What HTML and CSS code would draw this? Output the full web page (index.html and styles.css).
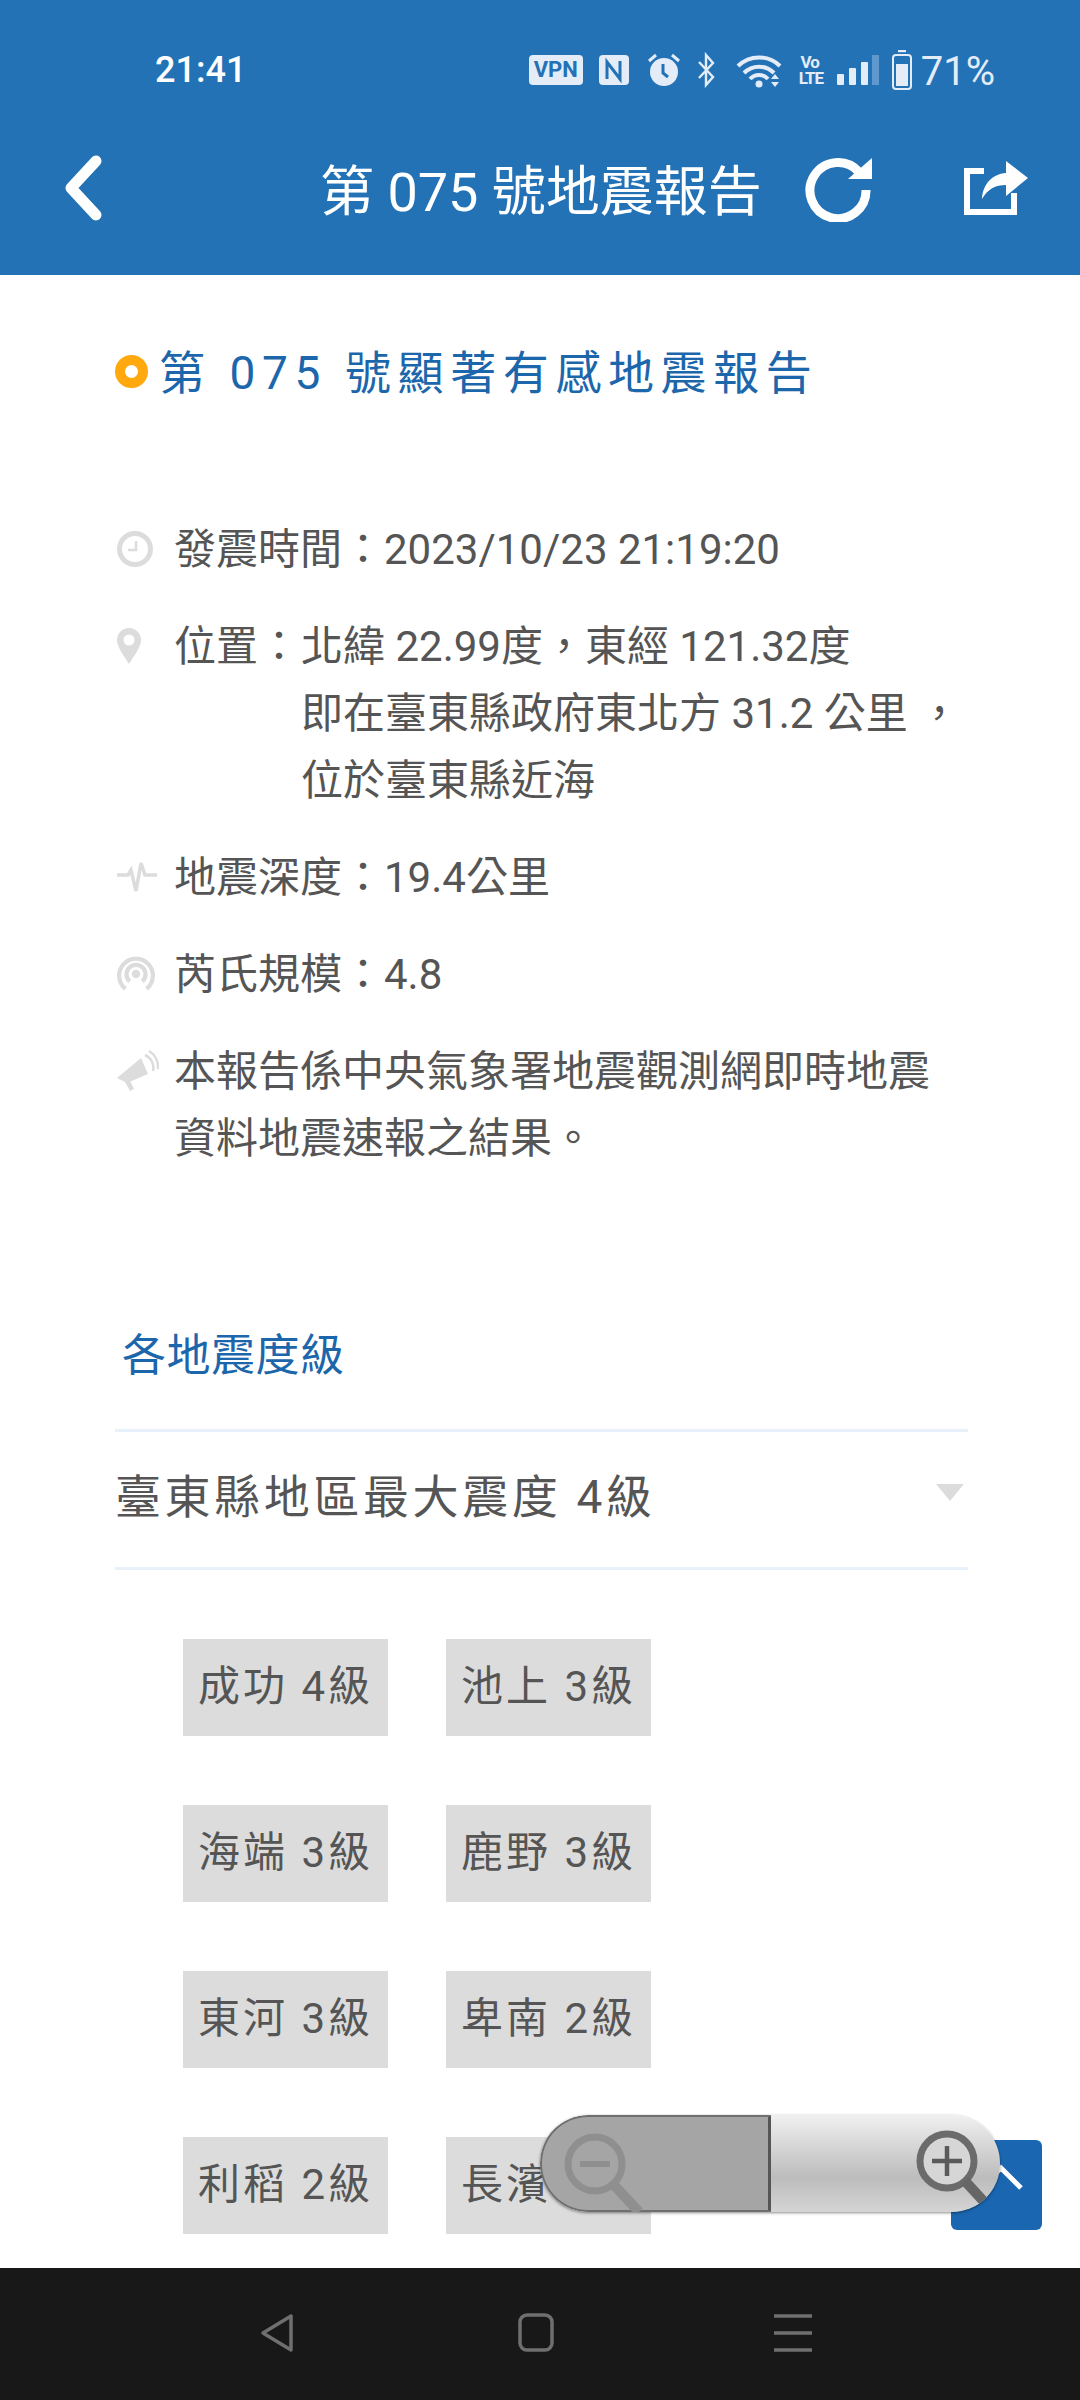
FILE: index.html
```html
<!DOCTYPE html>
<html lang="zh-Hant">
<head>
    <meta charset="UTF-8">
    <meta name="viewport" content="width=device-width, initial-scale=1.0">
    <title>第 075 號地震報告</title>
    <link rel="stylesheet" href="styles.css">
</head>
<body>
<div class="phone">
    <header class="topbar">
        <div class="status">
            <span class="clock">21:41</span>
            <div class="status-icons">
                <span class="vpn">VPN</span>
                <svg class="st-nfc" viewBox="0 0 30 30"><rect width="30" height="30" rx="4" fill="#e3ecf7"/><path d="M8 24V7l13 17V6" fill="none" stroke="#2472b6" stroke-width="3"/></svg>
                <svg class="st-alarm" viewBox="0 0 34 34"><circle cx="17" cy="19" r="14" fill="#e3ecf7"/><path d="M2 8l7-6M32 8l-7-6" stroke="#e3ecf7" stroke-width="3"/><path d="M16 11v9l5 4" fill="none" stroke="#2472b6" stroke-width="3"/></svg>
                <svg class="st-bt" viewBox="0 0 18 36"><path d="M2 10l14 15-7 8V3l7 8L2 26" fill="none" stroke="#e3ecf7" stroke-width="2.4"/></svg>
                <svg class="st-wifi" viewBox="0 0 46 36"><path d="M2 14a30 30 0 0 1 42 0M8 21a21 21 0 0 1 30 0M14 27a12 12 0 0 1 18 0" fill="none" stroke="#e3ecf7" stroke-width="4"/><circle cx="23" cy="32" r="3.5" fill="#e3ecf7"/><path d="M35 27l4-5 4 5zM35 30l4 5 4-5z" fill="#e3ecf7"/></svg>
                <span class="volte">Vo<br>LTE</span>
                <svg class="st-bars" viewBox="0 0 42 30"><rect x="0" y="19" width="7" height="11" rx="1" fill="#e3ecf7"/><rect x="12" y="13" width="7" height="17" rx="1" fill="#e3ecf7"/><rect x="24" y="7" width="7" height="23" rx="1" fill="#e3ecf7"/><rect x="35" y="0" width="7" height="30" fill="#5f98cc"/></svg>
                <svg class="st-batt" viewBox="0 0 20 40"><path d="M6 1h8" stroke="#e3ecf7" stroke-width="2.4"/><rect x="1" y="5" width="18" height="34" rx="3" fill="none" stroke="#e3ecf7" stroke-width="2"/><rect x="4" y="14" width="12" height="22" fill="#e3ecf7"/></svg>
                <span class="batt-text">71%</span>
            </div>
        </div>
        <div class="toolbar">
            <svg class="tb-back" viewBox="0 0 42 66"><path d="M34 6L9 33l25 27" fill="none" stroke="#fff" stroke-width="11" stroke-linecap="round" stroke-linejoin="round"/></svg>
            <h1 class="tb-title">第 075 號地震報告</h1>
            <svg class="tb-reload" viewBox="0 0 68 68"><path d="M54 18A28 28 0 1 0 61 36" fill="none" stroke="#fff" stroke-width="9"/><path d="M43 25h24V4z" fill="#fff"/></svg>
            <svg class="tb-share" viewBox="0 0 64 54"><path d="M20 10H3v41h47V32" fill="none" stroke="#fff" stroke-width="6"/><path d="M42 0l22 17-22 18V24c-11 0-18 4-24 14 1-15 10-25 24-26z" fill="#fff"/></svg>
        </div>
    </header>

    <main class="content">
        <h2 class="report-title"><span class="dot"></span>第 075 號顯著有感地震報告</h2>

        <ul class="info">
            <li>
                <span class="ic"><svg width="36" height="36" viewBox="0 0 36 36"><circle cx="18" cy="18" r="15.5" fill="none" stroke="#dcdcdc" stroke-width="5"/><path d="M19 10v9h-8" fill="none" stroke="#dcdcdc" stroke-width="2.5"/></svg></span>
                <span>發震時間：2023/10/23 21:19:20</span>
            </li>
            <li>
                <span class="ic"><svg width="24" height="36" viewBox="0 0 24 36"><path fill-rule="evenodd" d="M12 0a12 12 0 0 1 12 12c0 7-7 16-12 24C7 28 0 19 0 12A12 12 0 0 1 12 0zm0 6.500a5.500 5.500 0 1 0 0 11 5.500 5.500 0 0 0 0-11z" fill="#dcdcdc"/></svg></span>
                <span class="label">位置：</span>
                <span class="value">北緯 22.99度，東經 121.32度<br>即在臺東縣政府東北方 31.2 公里 ，<br>位於臺東縣近海</span>
            </li>
            <li>
                <span class="ic"><svg width="40" height="32" viewBox="0 0 40 32"><path d="M0 14h11l3-5 5 21 5-28 4 12h12" fill="none" stroke="#dcdcdc" stroke-width="3.500"/></svg></span>
                <span>地震深度：19.4公里</span>
            </li>
            <li>
                <span class="ic"><svg width="38" height="38" viewBox="0 0 36 36"><g fill="none" stroke="#dcdcdc" stroke-width="4"><path d="M8 32A16 16 0 1 1 28 32"/><path d="M12 25A9 9 0 1 1 24 25"/></g><circle cx="18" cy="18" r="4" fill="#dcdcdc"/></svg></span>
                <span>芮氏規模：4.8</span>
            </li>
            <li>
                <span class="ic"><svg width="42" height="42" viewBox="0 0 42 42"><path d="M0 28L24 8l7 16-21 9z" fill="#dcdcdc"/><path d="M8 32l5 9 4-2-4-8z" fill="#dcdcdc"/><path d="M28 5a14 14 0 0 1 8 16M32 1a19 19 0 0 1 9 18" fill="none" stroke="#dcdcdc" stroke-width="2.500"/></svg></span>
                <span>本報告係中央氣象署地震觀測網即時地震<br>資料地震速報之結果。</span>
            </li>
        </ul>

        <h3 class="section-title">各地震度級</h3>

        <div class="county">
            <span>臺東縣地區最大震度 4級</span>
            <span class="caret"></span>
        </div>

        <div class="chips">
            <div class="chip">成功 4級</div>
            <div class="chip">池上 3級</div>
            <div class="chip">海端 3級</div>
            <div class="chip">鹿野 3級</div>
            <div class="chip">東河 3級</div>
            <div class="chip">卑南 2級</div>
            <div class="chip">利稻 2級</div>
            <div class="chip">長濱 2級</div>
        </div>
    </main>

    <nav class="navbar">
        <svg width="40" height="40" viewBox="0 0 40 40"><path d="M5 20L33 3v34z" fill="none" stroke="#6f6f6f" stroke-width="3.500" stroke-linejoin="round"/></svg>
        <svg width="36" height="40" viewBox="0 0 36 40"><rect x="2" y="2" width="32" height="35" rx="7" fill="none" stroke="#6f6f6f" stroke-width="3.500"/></svg>
        <svg width="38" height="40" viewBox="0 0 38 40"><path d="M0 3h38M0 20h38M0 37h38" stroke="#6f6f6f" stroke-width="3.500"/></svg>
    </nav>

    <div class="to-top"><svg width="91" height="90" viewBox="0 0 91 90"><path d="M30 48l20-20 20 20" fill="none" stroke="#fff" stroke-width="5"/></svg></div>

    <div class="zoomer">
        <div class="zoom-out">
            <svg width="90" height="90" viewBox="0 0 90 90"><circle cx="32" cy="32" r="27" fill="none" stroke="#8f8f8f" stroke-width="7"/><path d="M17 32h30" stroke="#8f8f8f" stroke-width="6"/><path d="M50 52l26 28" stroke="#8f8f8f" stroke-width="10"/></svg>
        </div>
        <div class="zoom-in">
            <svg width="90" height="90" viewBox="0 0 90 90"><circle cx="32" cy="32" r="27" fill="#d6d6d6" stroke="#6b6b6b" stroke-width="7"/><path d="M17 32h30M32 17v30" stroke="#5a5a5a" stroke-width="4.500"/><path d="M50 52l22 24" stroke="#666" stroke-width="10"/></svg>
        </div>
    </div>
</div>
</body>
</html>
```

FILE: styles.css
```css
* {
    box-sizing: border-box;
}
body {
    margin: 0;
    font-family: Roboto, "Noto Sans CJK TC", sans-serif;
    color: #555;
    background: #fff;
}
.phone {
    position: relative;
    width: 1080px;
    height: 2400px;
    display: flex;
    flex-direction: column;
    overflow: hidden;
}

/* top bar */
.topbar {
    flex: 0 0 275px;
    background-color: #2472b6;
    color: #fff;
}
.status {
    height: 100px;
    padding: 40px 85px 0 155px;
    display: flex;
    justify-content: space-between;
    align-items: center;
}
.clock {
    font-size: 36px;
    font-weight: 500;
}
.status-icons {
    display: flex;
    align-items: center;
    color: #e3ecf7;
}
.vpn {
    width: 54px;
    height: 30px;
    border-radius: 4px;
    background: #e3ecf7;
    color: #2472b6;
    font-size: 22px;
    font-weight: 700;
    line-height: 30px;
    text-align: center;
}
.st-nfc {
    width: 30px;
    height: 30px;
    margin-left: 16px;
}
.st-alarm {
    width: 34px;
    height: 34px;
    margin-left: 18px;
}
.st-bt {
    width: 18px;
    height: 36px;
    margin-left: 16px;
}
.st-wifi {
    width: 46px;
    height: 36px;
    margin-left: 21px;
}
.volte {
    width: 22px;
    margin-left: 17px;
    font-size: 17px;
    font-weight: 700;
    letter-spacing: -1px;
    line-height: 16px;
    text-align: center;
}
.st-bars {
    width: 42px;
    height: 30px;
    margin-left: 16px;
}
.st-batt {
    width: 20px;
    height: 40px;
    margin-left: 13px;
}
.batt-text {
    margin: 2px 0 0 9px;
    font-size: 40px;
}
.toolbar {
    height: 175px;
    padding: 0 0 0 62px;
    display: flex;
    align-items: center;
}
.tb-back {
    width: 42px;
    height: 66px;
}
.tb-title {
    margin: 0 0 0 216px;
    width: 440px;
    font-size: 54px;
    font-weight: 400;
    white-space: nowrap;
}
.tb-reload {
    width: 68px;
    height: 68px;
    margin-left: 45px;
}
.tb-share {
    width: 64px;
    height: 54px;
    margin-left: 91px;
}

/* report */
.content {
    flex: 1;
    min-height: 0;
    padding: 60px 112px 0 115px;
    overflow: hidden;
}
.report-title {
    margin: 0;
    height: 68px;
    display: flex;
    align-items: center;
    font-size: 46px;
    font-weight: 400;
    letter-spacing: 6.600px;
    color: #1c66ab;
    white-space: pre;
}
.dot {
    width: 33px;
    height: 33px;
    margin: 4px 11px 0 0;
    border: 10px solid #ffa90f;
    border-radius: 50%;
    background: #fff;
}
.info {
    list-style: none;
    margin: 113px 0 0;
    padding: 0;
}
.info li {
    display: flex;
    margin-bottom: 30px;
    font-size: 42px;
    line-height: 67px;
    white-space: nowrap;
}
.ic {
    flex: 0 0 59px;
    height: 66px;
    padding-left: 2px;
    display: flex;
    align-items: center;
}
.label {
    width: 127px;
}
.section-title {
    margin: 152px 0 0 7px;
    font-size: 44px;
    font-weight: 400;
    line-height: 64px;
    letter-spacing: .5px;
    color: #1c66ab;
}
.county {
    margin-top: 41px;
    height: 141px;
    padding: 0 4px 14px 0;
    display: flex;
    justify-content: space-between;
    align-items: center;
    border-top: 3px solid #e8f1f9;
    border-bottom: 3px solid #e8f1f9;
    font-size: 46px;
    letter-spacing: 3.600px;
    color: #555;
}
.caret {
    width: 0;
    height: 0;
    border-left: 14px solid transparent;
    border-right: 14px solid transparent;
    border-top: 17px solid #dcdcdc;
}
.chips {
    margin: 69px 0 0 68px;
    display: grid;
    grid-template-columns: 205px 205px;
    column-gap: 58px;
    row-gap: 69px;
}
.chip {
    height: 97px;
    background-color: #dcdcdc;
    font-size: 42px;
    letter-spacing: 3px;
    line-height: 96px;
    text-align: center;
    white-space: nowrap;
}

/* bottom nav */
.navbar {
    flex: 0 0 132px;
    padding: 0 0 2px 258px;
    display: flex;
    align-items: center;
    gap: 220px;
    background-color: #181818;
}

/* floating controls */
.to-top {
    position: absolute;
    left: 951px;
    top: 2140px;
    width: 91px;
    height: 90px;
    border-radius: 6px;
    background-color: #1b66b0;
}
.zoomer {
    position: absolute;
    left: 540px;
    top: 2115px;
    width: 460px;
    height: 97px;
    display: flex;
    border-radius: 48px;
    box-shadow: 0 1px 3px rgba(0, 0, 0, .45);
    overflow: hidden;
}
.zoom-out {
    flex: 0 0 231px;
    padding: 15px 0 0 21px;
    background-color: #a5a5a5;
    border: 2px solid #6f6f6f;
    border-right: 3px solid #555;
    border-radius: 48px 0 0 48px;
}
.zoom-in {
    flex: 0 0 229px;
    padding: 14px 0 0 144px;
    background: linear-gradient(#f0f0f0, #bcbcbc 65%, #d5d5d5);
}
```
